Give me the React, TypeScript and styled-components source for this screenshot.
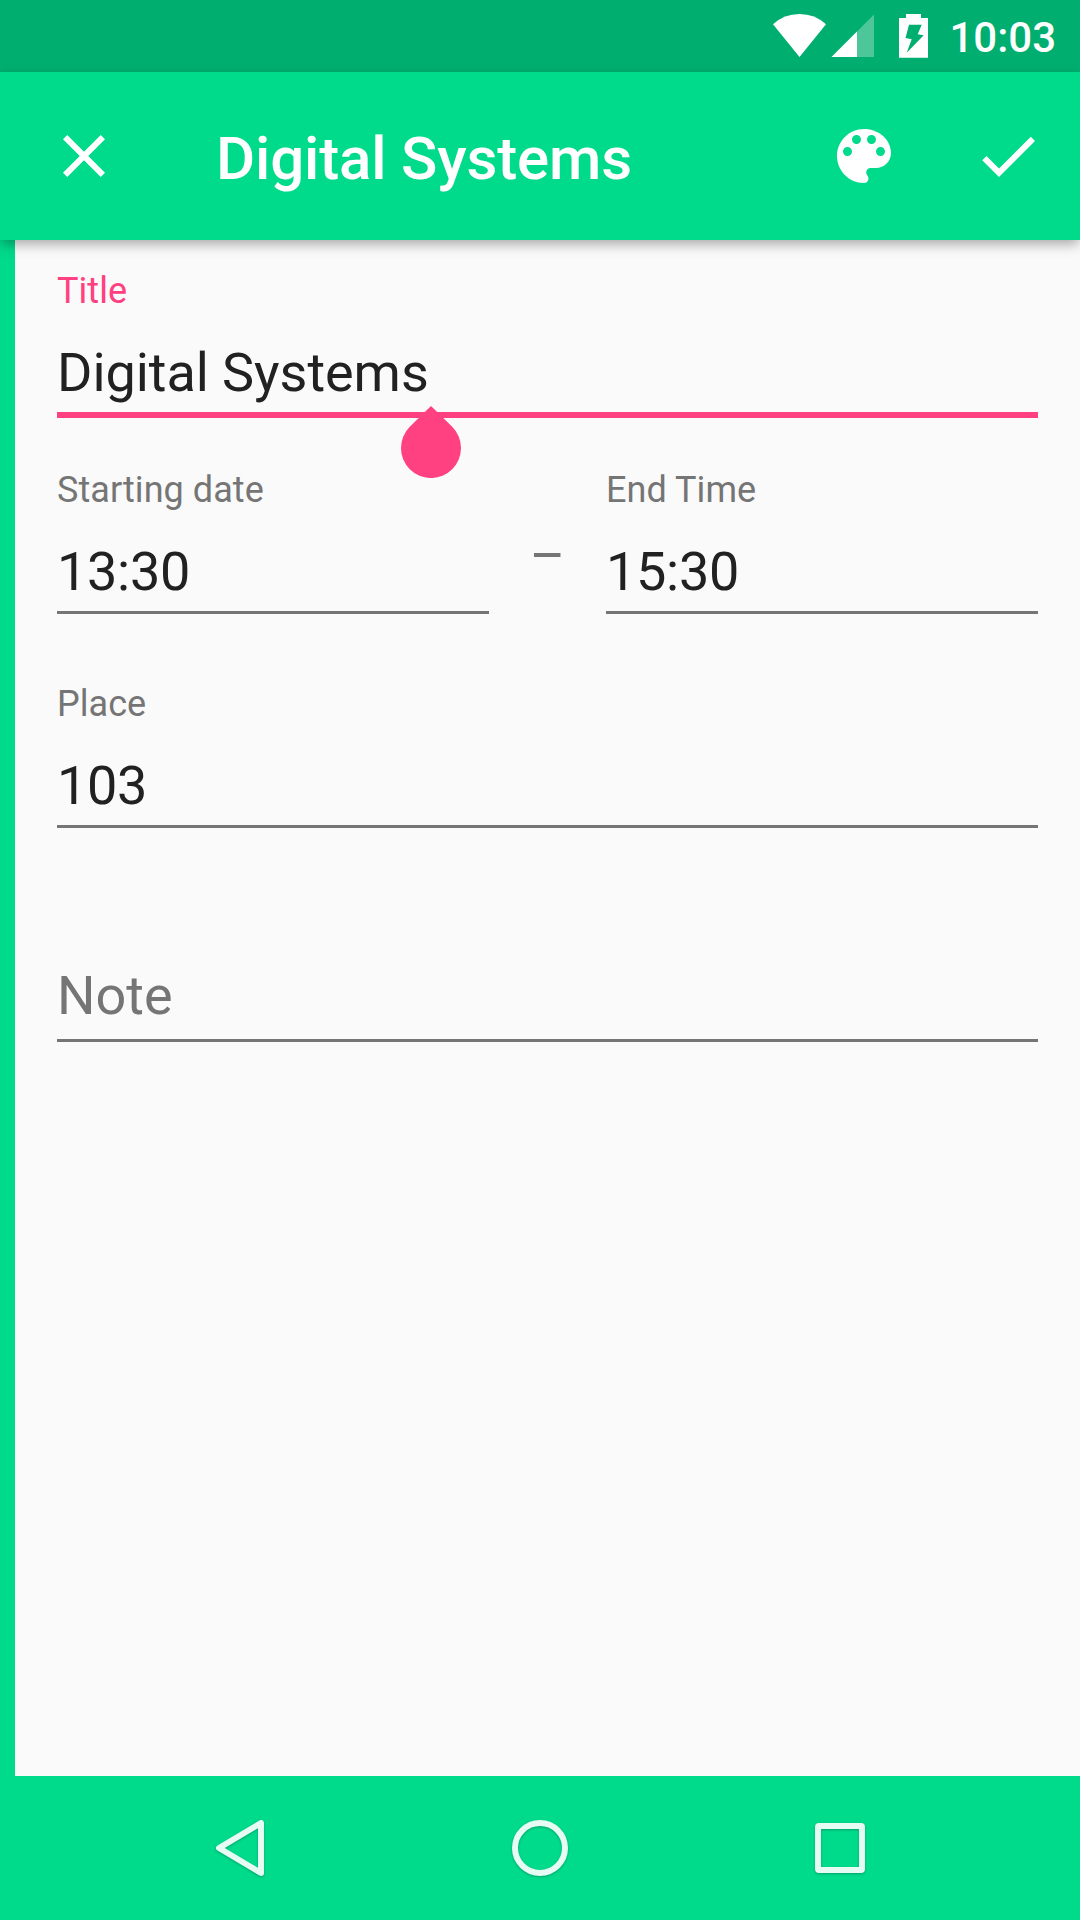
import React from "react";
import styled, { createGlobalStyle } from "styled-components";

const green = "#00da8b";
const greenDark = "#00ae6f";
const pink = "#ff4081";
const grey = "#757575";
const ink = "#212121";

const GlobalStyle = createGlobalStyle`
  * { box-sizing: border-box; }
  body {
    margin: 0;
    background: #fafafa;
    font-family: Roboto, "Noto Sans", sans-serif;
  }
`;

const Screen = styled.div`
  display: flex;
  flex-direction: column;
  width: 1080px;
  height: 1920px;
  overflow: hidden;
  background: #fafafa;
`;

const StatusBar = styled.div`
  display: flex;
  align-items: center;
  justify-content: flex-end;
  flex: none;
  height: 72px;
  padding-right: 24px;
  background: ${greenDark};
`;

const StatusIcons = styled.svg`
  flex: none;
  width: 160px;
  height: 72px;
  margin-right: 19px;
`;

const Clock = styled.span`
  color: #fff;
  font-size: 42px;
  font-weight: 500;
  line-height: 50px;
  padding-top: 4px;
`;

const AppBar = styled.header`
  position: relative;
  z-index: 1;
  display: flex;
  align-items: center;
  flex: none;
  height: 168px;
  padding: 0 36px 0 48px;
  background: ${green};
  box-shadow: 0 5px 12px -1px rgba(0, 0, 0, 0.34);
`;

const IconButton = styled.button`
  display: flex;
  flex: none;
  width: 72px;
  height: 72px;
  padding: 0;
  border: 0;
  background: none;

  & + & {
    margin-left: 72px;
  }

  svg {
    width: 72px;
    height: 72px;
    fill: #fff;
  }
`;

const BarTitle = styled.h1`
  flex: 1;
  margin: 0 0 0 96px;
  padding-top: 5px;
  color: #fff;
  font-size: 60px;
  font-weight: 500;
  letter-spacing: -0.15px;
  line-height: 70px;
  white-space: nowrap;
`;

const Form = styled.main`
  display: flex;
  flex-direction: column;
  flex: 1;
  padding: 30px 42px 0;
  border-left: 15px solid ${green};
`;

const Field = styled.div<{ $focused?: boolean; $top?: number }>`
  position: relative;
  display: flex;
  flex-direction: column;
  margin-top: ${(p) => p.$top ?? 0}px;
  height: ${(p) => (p.$focused ? 148 : 145)}px;
  border-bottom: ${(p) => (p.$focused ? `6px solid ${pink}` : `3px solid ${grey}`)};
`;

const Label = styled.label<{ $focused?: boolean }>`
  height: 42px;
  margin-bottom: 29px;
  color: ${(p) => (p.$focused ? pink : grey)};
  font-size: 36px;
  letter-spacing: 0.05px;
  line-height: 42px;
`;

const Value = styled.div<{ $numeric?: boolean }>`
  color: ${ink};
  font-size: 54px;
  letter-spacing: ${(p) => (p.$numeric ? "-0.3px" : "-0.06px")};
  line-height: 64px;
  white-space: nowrap;
`;

const Hint = styled(Value)`
  margin-top: 67px;
  color: ${grey};
  letter-spacing: 0;
`;

const CursorHandle = styled.svg`
  position: absolute;
  left: 344px;
  top: 136px;
  width: 60px;
  height: 72px;
`;

const TimeRow = styled.div`
  display: grid;
  grid-template-columns: 432px 117px 432px;
  margin-top: 51px;
`;

const Dash = styled.span`
  padding-top: 55px;
  color: ${grey};
  font-size: 54px;
  line-height: 64px;
  text-align: center;
`;

const NavBar = styled.nav`
  display: grid;
  grid-template-columns: repeat(3, 300px);
  justify-content: center;
  align-items: center;
  justify-items: center;
  flex: none;
  height: 144px;
  background: ${green};
`;

const NavIcon = styled.svg`
  width: 72px;
  height: 72px;
  fill: none;
  stroke: #e5fbf3;
  stroke-width: 6;
  stroke-linejoin: round;
  filter: drop-shadow(0 1.5px 1px rgba(0, 0, 0, 0.25));
`;

interface TextFieldProps {
  label: string;
  value: string;
  focused?: boolean;
  numeric?: boolean;
  top?: number;
}

function TextField({ label, value, focused, numeric, top }: TextFieldProps) {
  return (
    <Field $focused={focused} $top={top}>
      <Label $focused={focused}>{label}</Label>
      <Value $numeric={numeric}>{value}</Value>
      {focused && (
        <CursorHandle viewBox="0 0 60 72">
          <path fill={pink} d="M30 0L51.2 20.8A30 30 0 1 1 8.8 20.8z" />
        </CursorHandle>
      )}
    </Field>
  );
}

export default function App() {
  return (
    <>
      <GlobalStyle />
      <Screen>
        <StatusBar>
          <StatusIcons viewBox="770 0 160 72">
            <path fill="#fff" d="M773 24.3Q784 14 799.5 14T826 24.3L799.5 57z" />
            <path fill="#fff" fillOpacity="0.3" d="M874 14.5V57H831.5z" />
            <path fill="#fff" d="M857 31.5V57H831.5z" />
            <path
              fill="#fff"
              fillRule="evenodd"
              d="M906 14h15v4h7v39.8h-29V18h7zM909 24.7L905.5 38l6.2 1.3-5 13.4 17-17.4-6-1 4-9.6z"
            />
          </StatusIcons>
          <Clock>10:03</Clock>
        </StatusBar>

        <AppBar>
          <IconButton aria-label="Close">
            <svg viewBox="0 0 24 24">
              <path d="M19 6.41L17.59 5 12 10.59 6.41 5 5 6.41 10.59 12 5 17.59 6.41 19 12 13.41 17.59 19 19 17.59 13.41 12z" />
            </svg>
          </IconButton>
          <BarTitle>Digital Systems</BarTitle>
          <IconButton aria-label="Color">
            <svg viewBox="0 0 24 24">
              <path d="M12 3c-4.97 0-9 4.03-9 9s4.03 9 9 9c.83 0 1.5-.67 1.5-1.5 0-.39-.15-.74-.39-1.01-.23-.26-.38-.61-.38-.99 0-.83.67-1.5 1.5-1.5H16c2.76 0 5-2.24 5-5 0-4.42-4.03-8-9-8zm-5.5 9c-.83 0-1.5-.67-1.5-1.5S5.67 9 6.5 9 8 9.67 8 10.5 7.33 12 6.5 12zm3-4C8.67 8 8 7.33 8 6.5S8.67 5 9.5 5s1.5.67 1.5 1.5S10.33 8 9.5 8zm5 0c-.83 0-1.5-.67-1.5-1.5S13.67 5 14.5 5s1.5.67 1.5 1.5S15.33 8 14.5 8zm3 4c-.83 0-1.5-.67-1.5-1.5S16.67 9 17.5 9s1.5.67 1.5 1.5-.67 1.5-1.5 1.5z" />
            </svg>
          </IconButton>
          <IconButton aria-label="Save">
            <svg viewBox="0 0 24 24">
              <path d="M9 16.17L4.83 12l-1.42 1.41L9 19 21 7l-1.41-1.41z" />
            </svg>
          </IconButton>
        </AppBar>

        <Form>
          <TextField label="Title" value="Digital Systems" focused />
          <TimeRow>
            <TextField label="Starting date" value="13:30" numeric />
            <Dash>–</Dash>
            <TextField label="End Time" value="15:30" numeric />
          </TimeRow>
          <TextField label="Place" value="103" top={69} numeric />
          <Field $top={69}>
            <Hint>Note</Hint>
          </Field>
        </Form>

        <NavBar>
          <NavIcon viewBox="0 0 72 72">
            <path d="M57 11V61L15 36z" />
          </NavIcon>
          <NavIcon viewBox="0 0 72 72">
            <circle cx="36" cy="36" r="25" />
          </NavIcon>
          <NavIcon viewBox="0 0 72 72">
            <rect x="14" y="14" width="44" height="44" rx="1" />
          </NavIcon>
        </NavBar>
      </Screen>
    </>
  );
}
